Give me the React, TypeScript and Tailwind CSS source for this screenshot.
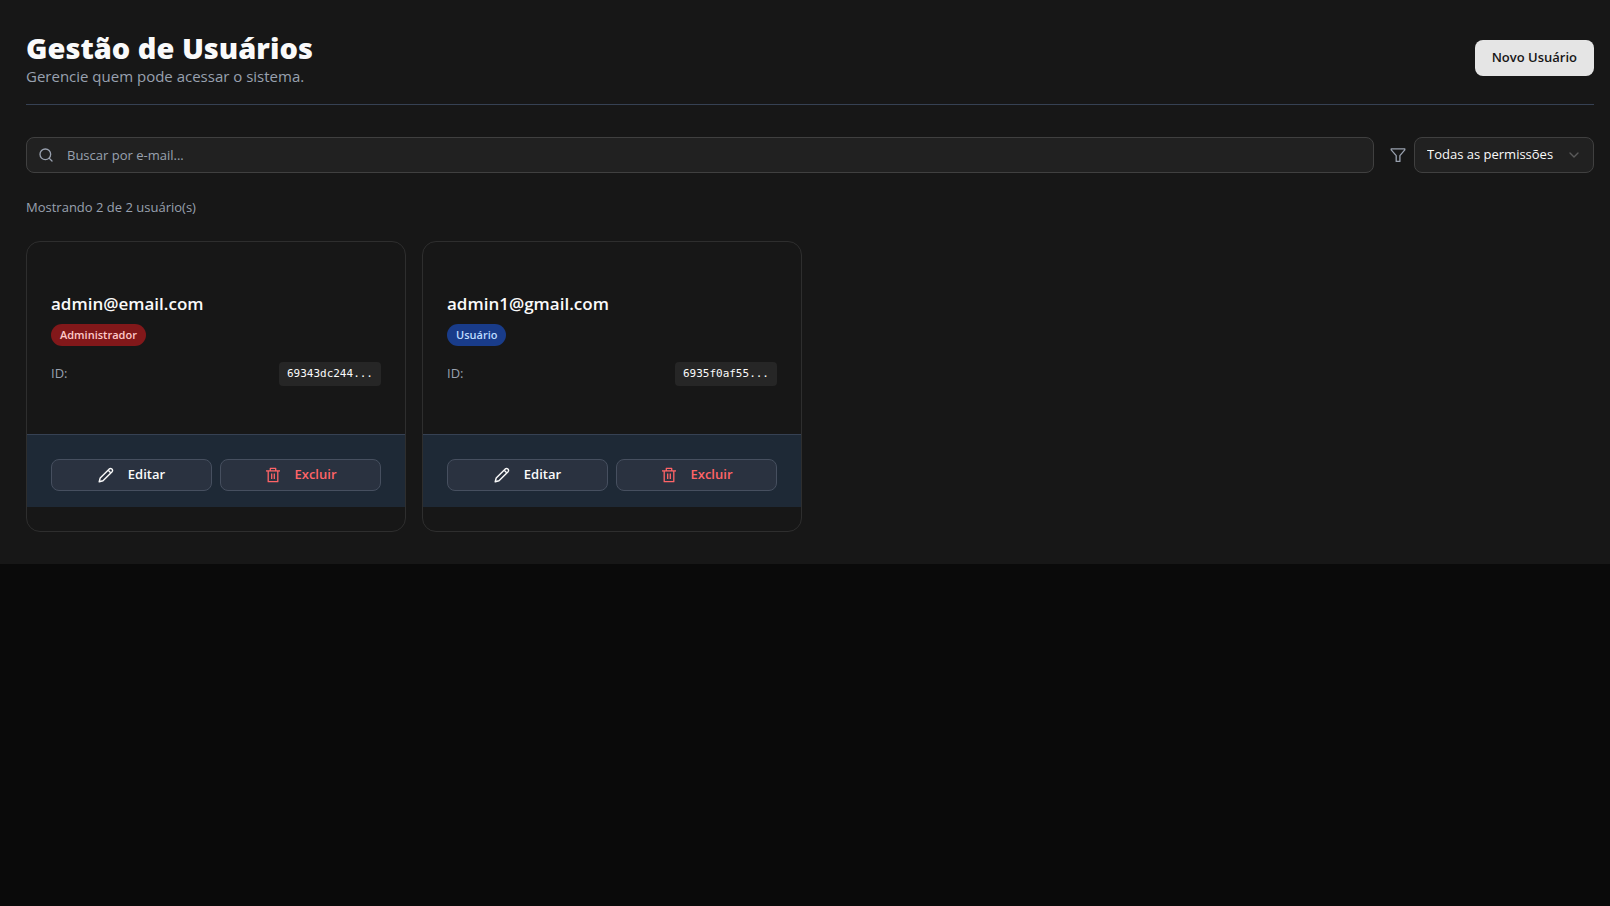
import React, { useState } from 'react';
import { ChevronDown, Search } from 'lucide-react';

interface User {
  id: string;
  email: string;
  role: 'admin' | 'user';
}

const USERS: User[] = [
  { id: '69343dc244a1', email: 'admin@email.com', role: 'admin' },
  { id: '6935f0af55b2', email: 'admin1@gmail.com', role: 'user' },
];

const FilterIcon: React.FC = () => (
  <svg
    viewBox="0 0 16 16"
    className="h-4 w-4 shrink-0 text-gray-400"
    fill="none"
    stroke="currentColor"
    strokeWidth="1.3"
    strokeLinejoin="round"
    aria-hidden="true"
  >
    <path d="M1.2 1.8h13.6v1L9.9 8.6v5.8H6.2V8.6L1.2 2.8z" />
  </svg>
);

const PencilIcon: React.FC = () => (
  <svg
    viewBox="0 0 16 16"
    className="h-4 w-4 shrink-0"
    fill="none"
    stroke="currentColor"
    strokeWidth="1.4"
    strokeLinejoin="round"
    strokeLinecap="round"
    aria-hidden="true"
  >
    <path d="M1.2 14.8 2.2 11 11.3 1.9a2 2 0 0 1 2.8 2.8L5 13.8z" />
    <path d="m10.7 3.8 1.5 1.5" />
  </svg>
);

const TrashIcon: React.FC = () => (
  <svg
    viewBox="0 0 16 16"
    className="h-4 w-4 shrink-0"
    fill="none"
    stroke="currentColor"
    strokeWidth="1.3"
    strokeLinejoin="round"
    aria-hidden="true"
  >
    <path d="M1 3.9h14" />
    <path d="M5.3 3.9V1.4h5.4v2.5" />
    <path d="M3.2 3.9v10.8h9.6V3.9" />
    <path d="M6.7 6.5v5.5M9.3 6.5v5.5" />
  </svg>
);

const UserCard: React.FC<{ user: User }> = ({ user }) => {
  const isAdmin = user.role === 'admin';

  return (
    <article className="flex flex-col gap-6 rounded-[14px] border border-[#2e2e2e] py-6">
      <div className="p-6">
        <h2 className="text-[17px] leading-7 font-semibold text-neutral-50">{user.email}</h2>
        <span
          className={
            isAdmin
              ? 'mt-1.5 flex w-fit rounded-full bg-[#82181a] px-[9px] py-[3px] text-[11px] leading-4 font-semibold text-[#ffc9c9]'
              : 'mt-1.5 flex w-fit rounded-full bg-[#193c8a] px-[9px] py-[3px] text-[11px] leading-4 font-semibold text-[#bedbff]'
          }
        >
          {isAdmin ? 'Administrador' : 'Usuário'}
        </span>
        <div className="mt-4 flex items-center justify-between text-[13px]">
          <span className="text-gray-400">ID:</span>
          <code className="rounded bg-[#262626] px-2 py-1 font-['DejaVu_Sans_Mono',monospace] text-[11px] leading-4 text-neutral-50">
            {user.id.substring(0, 10)}...
          </code>
        </div>
      </div>

      <div className="flex gap-2 border-t border-[#364153] bg-[#1e2936] px-6 pt-6 pb-4">
        <button
          type="button"
          className="flex h-8 flex-1 items-center justify-center gap-3.5 rounded-lg border border-[#464f5f] bg-[#2a3240] text-[13px] font-semibold text-neutral-50"
        >
          <PencilIcon />
          Editar
        </button>
        <button
          type="button"
          className="flex h-8 flex-1 items-center justify-center gap-3.5 rounded-lg border border-[#464f5f] bg-[#2a3240] text-[13px] font-semibold text-[#ff6467]"
        >
          <TrashIcon />
          Excluir
        </button>
      </div>
    </article>
  );
};

const App: React.FC = () => {
  const [search, setSearch] = useState('');
  const [role, setRole] = useState('all');

  const filtered = USERS.filter(
    (user) =>
      user.email.toLowerCase().includes(search.toLowerCase()) &&
      (role === 'all' || user.role === role)
  );

  return (
    <div className="min-h-screen bg-[#0a0a0a] font-['Segoe_UI','Open_Sans',sans-serif]">
      <main className="bg-[#171717] pt-7 pr-4 pb-8 pl-[26px]">
        <header className="flex items-center justify-between border-b border-[#364153] pb-4">
          <div className="pt-1">
            <h1 className="text-[29px] leading-8 font-extrabold text-neutral-50">Gestão de Usuários</h1>
            <p className="text-[15px] leading-6 text-gray-400">Gerencie quem pode acessar o sistema.</p>
          </div>
          <button
            type="button"
            className="h-9 rounded-lg bg-[#e5e5e5] px-[17px] text-[13px] font-semibold text-[#171717]"
          >
            Novo Usuário
          </button>
        </header>

        <div className="mt-8 flex items-center gap-4">
          <div className="relative flex-1">
            <Search
              className="absolute top-1/2 left-3 h-4 w-4 -translate-y-1/2 text-gray-400"
              strokeWidth={2}
            />
            <input
              type="text"
              aria-label="Buscar por e-mail"
              placeholder="Buscar por e-mail..."
              value={search}
              onChange={(e) => setSearch(e.target.value)}
              className="block h-9 w-full rounded-lg border border-[#404040] bg-[#212121] pr-3 pl-10 text-[13px] text-neutral-50 placeholder:text-gray-400"
            />
          </div>
          <div className="flex items-center gap-2">
            <FilterIcon />
            <div className="relative">
              <select
                aria-label="Filtrar por permissão"
                value={role}
                onChange={(e) => setRole(e.target.value)}
                className="block h-9 w-[180px] appearance-none rounded-lg border border-[#404040] bg-[#212121] px-3 text-[13px] text-neutral-50"
              >
                <option value="all">Todas as permissões</option>
                <option value="admin">Administrador</option>
                <option value="user">Usuário</option>
              </select>
              <ChevronDown
                className="pointer-events-none absolute top-1/2 right-3 h-4 w-4 -translate-y-1/2 text-[#5a5a5a]"
                strokeWidth={2}
              />
            </div>
          </div>
        </div>

        <p className="mt-6 text-[13px] leading-5 text-gray-400">
          Mostrando {filtered.length} de {USERS.length} usuário(s)
        </p>

        <section className="mt-6 grid grid-cols-1 gap-4 md:grid-cols-2 xl:grid-cols-4">
          {filtered.map((user) => (
            <UserCard key={user.id} user={user} />
          ))}
        </section>
      </main>
    </div>
  );
};

export default App;
